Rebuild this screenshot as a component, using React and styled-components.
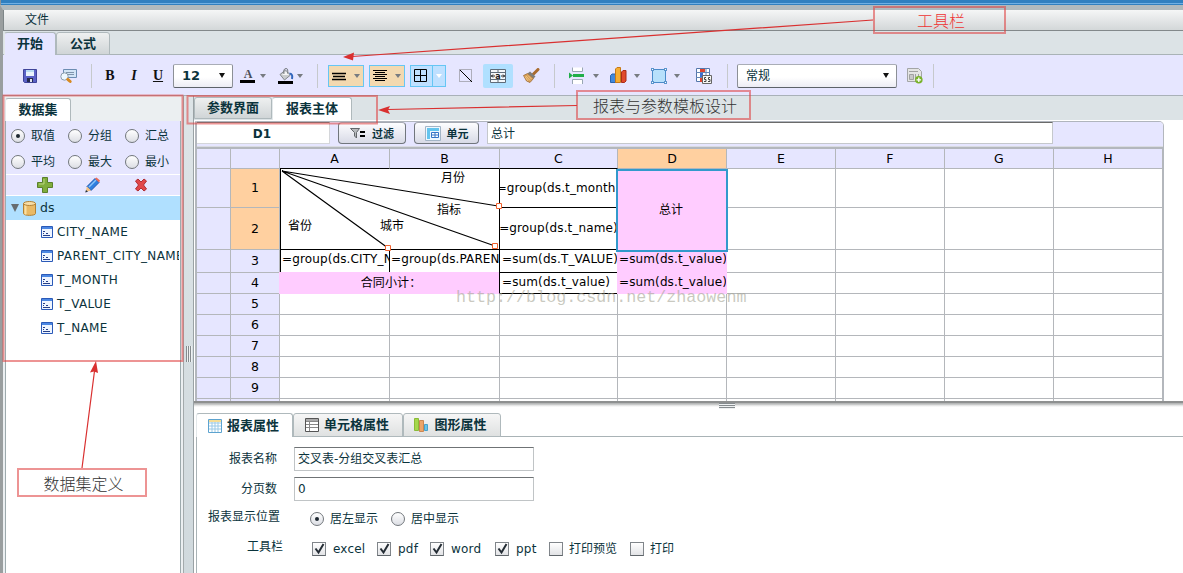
import React from 'react';
import styled, { createGlobalStyle, css } from 'styled-components';

const GlobalStyle = createGlobalStyle`
  * { box-sizing: border-box; }
  body {
    margin: 0;
    background: #fff;
    overflow: hidden;
  }
`

const Window = styled.div`
  position: relative;
  display: flex;
  flex-direction: column;
  width: 1183px;
  height: 573px;
  overflow: hidden;
  background: #fff;
  color: #0b333c;
  font-family: 'DejaVu Sans', 'Noto Sans CJK SC', sans-serif;
  font-size: 12px;
  line-height: 16px;
  white-space: nowrap;
`

const TitleStrip = styled.div`
  height: 5px;
  flex: none;
  border-left: 1px solid #8f9496;
  background: linear-gradient(#3080c0 0 3px, #6fb0e4 3px 4px, #3080c0 4px);
`

const Frame = styled.div`
  display: flex;
  flex-direction: column;
  flex: 1;
  min-height: 0;
  border-top: 5px solid #b0babe;
  border-left: 3px solid #999e9f;
`

const MenuBar = styled.div`
  flex: none;
  height: 21px;
  padding: 2px 0 0 21px;
  border-left: 1px solid #7e8688;
  border-bottom: 1px solid #83898b;
  background: linear-gradient(#f5f6f6, #d3d7d8);
  line-height: 17px;
`

const TabStrip = styled.div`
  display: flex;
  flex: none;
  height: 24px;
  padding: 1px 0 0 1px;
  background: #dce3e6;
  box-shadow: inset 0 -1px #a9b3b6;
`

const Tab = styled.div`
  display: flex;
  align-items: center;
  justify-content: center;
  gap: 5px;
  width: ${props => props.$w}px;
  height: ${props => props.$h || 23}px;
  padding-right: ${props => props.$pr || 0}px;
  border: 1px solid #afb9bc;
  border-left-color: ${props => props.$active ? '#e3e8ea' : '#afb9bc'};
  border-radius: 3px 3px 0 0;
  background: linear-gradient(${props => props.$light ? '#f6f6f6, #dfe1e1' : '#eef0f0, #d0d5d7'});
  font-size: 13px;
  font-weight: bold;
  ${props => props.$active && css`
    border-bottom: 0;
    background: ${props.$bg || '#fff'};
  `}
`

const Toolbar = styled.div`
  display: flex;
  align-items: center;
  flex: none;
  height: 41px;
  padding: 1px 0 0 20px;
  border-bottom: 1px solid #a9b1b8;
  background: #e6e6ff;
`

const Slot = styled.div`
  display: flex;
  align-items: center;
  justify-content: center;
  flex: none;
  width: ${props => props.$w}px;
  height: 24px;
  margin-left: ${props => props.$ml || 0}px;
`

const Letter = styled(Slot)`
  color: #111;
  font-family: 'Liberation Serif', serif;
  font-size: 14px;
  font-weight: bold;
  font-style: ${props => props.$italic ? 'italic' : 'normal'};
  text-decoration: ${props => props.$under ? 'underline' : 'none'};
`

const Divider = styled.i`
  flex: none;
  width: 1px;
  height: 24px;
  margin-left: ${props => props.$ml}px;
  background: #c6c9cc;
`

const Caret = styled.i`
  flex: none;
  width: 0;
  margin-left: ${props => props.$ml || 0}px;
  border: ${props => props.$s || 3.5}px solid transparent;
  border-bottom: 0;
  border-top: ${props => props.$h || 4}px solid ${props => props.$c || '#777b80'};
`

const Select = styled.div`
  display: flex;
  align-items: center;
  justify-content: space-between;
  flex: none;
  width: ${props => props.$w}px;
  height: 24px;
  margin-left: ${props => props.$ml}px;
  padding: 0 7px 0 8px;
  border: 1px solid #8c9096;
  border-top-color: #a9adb6;
  border-bottom-color: #5c6268;
  border-radius: 2px;
  background: linear-gradient(#fff 55%, #ececf4);
  font-size: ${props => props.$font || 12}px;
  font-weight: ${props => props.$bold ? 'bold' : 'normal'};
`

const SplitButton = styled.div`
  display: flex;
  align-items: center;
  flex: none;
  width: 36px;
  height: 22px;
  margin-left: ${props => props.$ml}px;
  padding-left: 2px;
  border: 1px solid #66c6f4;
  background: ${props => props.$blue ? '#bfe0ff' : '#f3d9b0'};
`

const SplitLine = styled.i`
  width: 1px;
  height: 20px;
  margin-left: 4px;
  background: #66c6f4;
`

const Merge = styled(Slot)`
  border-radius: 2px;
  background: #b0e0ff;
`

const Main = styled.div`
  display: flex;
  flex: 1;
  min-height: 0;
`

const Left = styled.div`
  display: flex;
  flex-direction: column;
  flex: none;
  width: 181px;
  background: #ebeff1;
  border-right: 1px solid #a3aaac;
`

const LeftTabs = styled.div`
  height: 25px;
  padding: 2px 0 0 2px;
`

const DataPanel = styled.div`
  flex: 1;
  margin: 0 2px;
  border-left: 1px solid #9daaad;
  border-right: 1px solid #9daaad;
  background: #fff;
`

const RadioGrid = styled.div`
  display: grid;
  grid-template-columns: 57px 57px 57px;
  grid-auto-rows: 26px;
  align-items: center;
  height: 53px;
  padding: 2px 0 0 5px;
  background: #e6e6ff;
`

const Choice = styled.label`
  display: flex;
  align-items: center;
  gap: 6px;
  margin-right: ${props => props.$mr || 0}px;
`

const Radio = styled.i`
  display: flex;
  align-items: center;
  justify-content: center;
  flex: none;
  width: 14px;
  height: 14px;
  border: 1px solid #72777c;
  border-radius: 50%;
  background: linear-gradient(#fff, #dcdee4);
  &::after {
    content: '';
    width: 4px;
    height: 4px;
    border-radius: 50%;
    background: ${props => props.$on ? '#1d2730' : 'transparent'};
  }
`

const PanelActions = styled.div`
  display: flex;
  align-items: center;
  height: 22px;
  padding-left: 30px;
  gap: 30px;
  border-top: 1px solid #fff;
  border-bottom: 1px solid #fff;
  background: #e6e6ff;
`

const TreeRoot = styled.div`
  display: flex;
  align-items: center;
  height: 24px;
  padding-left: 5px;
  gap: 4px;
  background: #b0e0ff;
  font-size: 12.5px;
`

const TreeLeaf = styled.div`
  display: flex;
  align-items: center;
  gap: 4px;
  height: 24px;
  padding-left: 35px;
  margin-right: 1px;
  overflow: hidden;
  letter-spacing: 0.4px;
  svg { flex: none; }
`

const Splitter = styled.div`
  display: flex;
  align-items: center;
  justify-content: center;
  flex: none;
  width: 10px;
  padding-top: 38px;
  border-right: 1px solid #9aa2a5;
  background: linear-gradient(#dde4e7, #d0d9dd);
`

const Grip = styled.i`
  width: ${props => props.$flat ? 16 : 6}px;
  height: ${props => props.$flat ? 6 : 16}px;
  background: repeating-linear-gradient(${props => props.$flat ? '180deg' : '90deg'}, #858b8e 0 1px, #eef1f2 1px 2px);
`

const Right = styled.div`
  display: flex;
  flex-direction: column;
  flex: 1;
  min-width: 0;
`

const EditorTabs = styled(TabStrip)`
  height: 24px;
  padding: 1px 0 0;
  box-shadow: none;
`

const Sheet = styled.div`
  flex: none;
  width: 969px;
  height: 280px;
  margin: 1px 0 0 1px;
  overflow: hidden;
  border-top: 1px solid #b0b5bd;
  border-left: 2px solid #b3b7bd;
  border-right: 1px solid #b3b7bd;
  border-radius: 0 5px 0 0;
  background: #fff;
`

const FormulaBar = styled.div`
  display: flex;
  height: 25px;
  border-bottom: 1px solid #d9dbe2;
  background: #e6e6ff;
`

const CellName = styled.div`
  width: 133px;
  height: 22px;
  padding-right: 2px;
  border: 1px solid #d4d6da;
  border-top-color: #777;
  border-left: 0;
  background: #fff;
  text-align: center;
  line-height: 22px;
  font-weight: bold;
`

const BarButton = styled.button`
  display: flex;
  align-items: center;
  justify-content: center;
  gap: 6px;
  flex: none;
  width: ${props => props.$w}px;
  height: 22px;
  margin: 0 0 0 8px;
  padding: 0;
  border: 1px solid #71767d;
  border-top-color: #a6a9b2;
  border-radius: 4px;
  background: linear-gradient(#fdfdff, #d8dae6);
  color: #0b333c;
  font: bold 11px/16px 'Noto Sans CJK SC', sans-serif;
`

const FormulaInput = styled.div`
  width: 566px;
  height: 22px;
  margin-left: 8px;
  padding-left: 3px;
  border: 1px solid #c5c8cc;
  border-top-color: #6a6a6a;
  background: #fff;
  line-height: 22px;
`

const Cells = styled.div`
  display: grid;
  grid-template-columns: 34px 49px 110px 110px 118px repeat(5, 109px);
  grid-template-rows: 20px 39px 42px 23px 21px repeat(6, 21px);
  border-top: 2px solid #b3b7bd;
`

const line = '#b4b7bb';

const Cell = styled.div`
  position: relative;
  grid-row: ${props => props.$r} / span ${props => props.$rs || 1};
  grid-column: ${props => props.$c} / span ${props => props.$cs || 1};
  display: flex;
  align-items: center;
  justify-content: ${props => props.$left ? 'flex-start' : 'center'};
  min-width: 0;
  overflow: hidden;
  padding-left: ${props => props.$pad || 0}px;
  padding-bottom: ${props => props.$up || 0}px;
  border-right: 1px solid ${props => props.$right || line};
  border-bottom: 1px solid ${props => props.$bottom || line};
  ${props => props.$edge && 'border-left: 1px solid #000;'}
  color: #000;
  letter-spacing: 0.12px;
  ${props => props.$pink && css`
    margin: -1px 0 0 -1px;
    border-color: #ffccff;
    border-right-color: ${props.$right || '#ffccff'};
    background: #ffccff;
  `}
`

const HeadCell = styled(Cell)`
  background: ${props => props.$sel ? '#ffd0a0' : '#e6e6ff'};
  font-size: 12.5px;
  line-height: 18px;
`

const SelectedCell = styled(Cell)`
  margin: 0 -1px -2px -2px;
  padding: 0 2px 2px 0;
  border: 2px solid #3399cc;
  background: #ffccff;
  letter-spacing: 0;
  z-index: 1;
`

const DiagonalLabel = styled.span`
  position: absolute;
  left: ${props => props.$x}px;
  top: ${props => props.$y}px;
  letter-spacing: 0;
`

const Lines = styled.svg`
  position: absolute;
  left: 0;
  top: 0;
  overflow: visible;
`

const HandleLayer = styled.svg`
  position: absolute;
  left: 0;
  top: 0;
  z-index: 3;
  pointer-events: none;
`

const SplitShadow = styled.div`
  display: flex;
  justify-content: center;
  flex: none;
  height: 12px;
  padding: 2px 0 0 76px;
  background: linear-gradient(#8e9090 0 2px, #b5b7b7 2px 3px, #dcdddd 4px, #fff 6px);
`

const PropertyTabs = styled(TabStrip)`
  margin-left: 2px;
  padding: 0;
  background: #fff;
`

const PropertyForm = styled.div`
  display: flex;
  flex-direction: column;
  flex: 1;
  margin-left: 2px;
  padding-top: 10px;
  border-left: 1px solid #a9b3b6;
`

const Field = styled.div`
  display: flex;
  align-items: center;
  height: ${props => props.$h}px;
`

const FieldLabel = styled.div`
  width: ${props => props.$w || 80}px;
  margin-right: ${props => props.$gap || 17}px;
  margin-top: ${props => props.$lift || 0}px;
  text-align: right;
`

const TextBox = styled.div`
  width: 240px;
  height: 24px;
  padding-left: 3px;
  border: 1px solid #c0c4c6;
  border-top-color: #6f7375;
  line-height: 22px;
`

const Check = styled.i`
  display: block;
  flex: none;
  width: 14px;
  height: 14px;
  border: 1px solid #80858a;
  border-bottom-color: #5f656a;
  background: linear-gradient(#fff, #e2e3e6);
  svg { display: block; overflow: visible; }
`

const CheckItem = styled(Choice)`
  width: ${props => props.$w}px;
  gap: ${props => props.$gap || 7}px;
  letter-spacing: ${props => props.$gap ? 0 : 0.2}px;
`

const Overlay = styled.svg`
  position: absolute;
  inset: 0;
  z-index: 5;
  pointer-events: none;
`

const Note = styled.div`
  position: absolute;
  left: ${props => props.$x}px;
  top: ${props => props.$y}px;
  z-index: 6;
  width: ${props => props.$w}px;
  height: ${props => props.$h}px;
  padding-left: 3px;
  border: 2px solid rgba(222, 60, 60, 0.55);
  color: ${props => props.$red ? '#e33' : '#333'};
  font-family: 'Noto Sans CJK SC', sans-serif;
  font-size: 16px;
  font-weight: 300;
  line-height: ${props => props.$h - 3}px;
  text-align: center;
`

const Watermark = styled.div`
  position: absolute;
  left: 456px;
  top: 288px;
  z-index: 4;
  color: rgba(165, 165, 150, 0.6);
  font-family: 'Liberation Mono', monospace;
  font-size: 16.7px;
  line-height: 20px;
`

const SaveIcon = () => (
  <svg width="14" height="14" viewBox="0 0 14 14">
    <path d="M.5.5h13v13h-12l-1-1z" fill="#5a62c6" stroke="#3f4499" />
    <path d="M3 1h8v6H3z" fill="#e9f4fc" />
    <path d="M3 1h8v2H3z" fill="#b9dcf4" />
    <path d="M4 9h6v4H4z" fill="#252a4d" />
    <path d="M7 10h2v3H7z" fill="#dfe3ef" />
  </svg>
)

const PreviewIcon = () => (
  <svg width="17" height="16" viewBox="0 0 17 16">
    <path d="M3.500 1.500h13v8h-13z" fill="#d3e5f6" stroke="#6c8db2" />
    <path d="M6 4.500h8M8 6.500h6" stroke="#7f95ac" />
    <circle cx="4.500" cy="8.500" r="3.700" fill="#eef8ff" stroke="#8a9cab" />
    <path d="M7.800 11.300l2.400 2.200" stroke="#d78a22" strokeWidth="3" strokeLinecap="round" />
  </svg>
)

const FontColorIcon = () => (
  <svg width="15" height="16" viewBox="0 0 15 16">
    <text x="8" y="10" textAnchor="middle" fontFamily="Liberation Serif, serif" fontWeight="bold" fontSize="12" fill="#4a4d58">A</text>
    <path d="M0 12h15v3H0z" fill="#000" />
  </svg>
)

const BucketIcon = () => (
  <svg width="16" height="18" viewBox="0 0 16 18">
    <path d="M2 7.500L7.500 3l5 5-6 5z" fill="#c9cbcd" stroke="#84888c" />
    <path d="M4 8l4-3.500 3 3.500z" fill="#f5f5f5" />
    <path d="M6 7c-1-3 0-5.500 2-5.500s2 2 1.500 5" fill="none" stroke="#797d81" />
    <path d="M11.500 6.500c3 0 3 3 2.500 5.500" fill="none" stroke="#3267bd" strokeWidth="2" />
    <path d="M0 14h15v3H0z" fill="#000" />
  </svg>
)

const LinesIcon = ({ center }) => (
  <svg width="17" height="14" viewBox="0 0 17 14" stroke="#000">
    {center
      ? <path d="M1 1.500h14M3 3.500h10M1 5.500h14M3 7.500h10M1 9.500h14M3 11.500h10" />
      : <path d="M1 4.500h14M2 7.500h12M1 10.500h14" strokeWidth="1.300" />}
  </svg>
)

const BorderIcon = () => (
  <svg width="15" height="15" viewBox="0 0 15 15">
    <path d="M1.500 1.500h12v12h-12zM7.500 1.500v12M1.500 7.500h12" fill="none" stroke="#000" />
  </svg>
)

const DiagonalIcon = () => (
  <svg width="14" height="14" viewBox="0 0 14 14">
    <path d="M.5.5h12v12H.5z" fill="none" stroke="#777" strokeDasharray="1 1" />
    <path d="M1 1l12 12" stroke="#000" />
  </svg>
)

const MergeIcon = () => (
  <svg width="16" height="14" viewBox="0 0 16 14">
    <path d="M.5.5h15v13H.5z" fill="#f4f8fb" stroke="#5f6c79" />
    <path d="M.5 3.500h15M.5 10.500h15M8 .5v3M8 10.500v3" stroke="#5f6c79" />
    <path d="M1 7h4M15 7h-4M3 5.500L1.500 7 3 8.500M13 5.500L14.500 7 13 8.500" fill="none" stroke="#222" />
    <text x="8" y="9.500" textAnchor="middle" fontFamily="DejaVu Sans" fontWeight="bold" fontSize="8" fill="#222">a</text>
  </svg>
)

const BrushIcon = () => (
  <svg width="17" height="15" viewBox="0 0 17 15">
    <path d="M15 1.500L9.500 7" stroke="#a96b2e" strokeWidth="3" strokeLinecap="round" />
    <path d="M7 3.500l5.500 5-2 2-6-5z" fill="#7f7e79" />
    <path d="M4.500 5.500l6 5-3.500 4L3.500 13 .5 7.500z" fill="#d59d55" stroke="#96612a" strokeWidth=".7" />
    <path d="M3 8l4 4.500M5 7.500l3.500 3.500M2 8.500l3 4.500" stroke="#f0c583" />
  </svg>
)

const InsertIcon = () => (
  <svg width="17" height="18" viewBox="0 0 17 18">
    <path d="M3.500.5v4h10v-4M3.500 17v-4.500h10V17" fill="#fff" stroke="#98a6b3" />
    <path d="M4 7h11v3H4z" fill="#20ae48" />
    <path d="M0 5.500l4 3-4 3z" fill="#20ae48" />
  </svg>
)

const ChartIcon = () => (
  <svg width="17" height="17" viewBox="0 0 17 17">
    <path d="M.5 8.500l1.500-1.500h3.500v8.500h-5z" fill="#4188dc" stroke="#2863ac" />
    <path d="M5.500 2l1.500-1.500h3.500v15h-5z" fill="#f5ad32" stroke="#c77916" />
    <path d="M11.500 5l1.500-1.500h3v10.500l-1.500 1.500h-3z" fill="#e14a2b" stroke="#a92d19" />
  </svg>
)

const AreaIcon = () => (
  <svg width="16" height="16" viewBox="0 0 16 16">
    <path d="M1.500 1.500h13v13h-13z" fill="#b7e0fb" stroke="#4a8bc9" />
    <path d="M0 0h3v3H0zM13 0h3v3h-3zM0 13h3v3H0zM13 13h3v3h-3z" fill="#5c95cc" />
    <path d="M1 1h1v1H1zM14 1h1v1h-1zM1 14h1v1H1zM14 14h1v1h-1z" fill="#fff" />
  </svg>
)

const FormatIcon = () => (
  <svg width="16" height="16" viewBox="0 0 16 16">
    <path d="M.5.5h13v13H.5z" fill="#fff" stroke="#5577ab" />
    <path d="M0 4.500h14M0 9.500h10M10 0v8" stroke="#6485b4" />
    <path d="M4 1h5v3H4zM4 10h3v4H4z" fill="#df4430" />
    <path d="M4 5h3v4H4z" fill="#3c6ed0" />
    <path d="M6.500 7.500h9v8h-9z" fill="#f7f7f4" stroke="#666" />
    <path d="M10 9.500H8.500v2H10v2H8M14 9.500h-1.500v2H14v2h-2" fill="none" stroke="#444" />
  </svg>
)

const AddSheetIcon = () => (
  <svg width="16" height="16" viewBox="0 0 16 16">
    <path d="M.5.5h11l3 3v10H.5z" fill="#e4e4e4" stroke="#a3a5a6" />
    <path d="M2 3.500h9M2.500 6.500h4v5h-4zM8.500 6v6M11.500 6v3" fill="#c8c8c8" stroke="#a1a1a1" />
    <circle cx="11.800" cy="11.800" r="3.800" fill="#78b22a" />
    <path d="M9.500 11.800h4.600M11.800 9.500v4.600" stroke="#fff" strokeWidth="1.300" />
  </svg>
)

const PlusIcon = () => (
  <svg width="18" height="16" viewBox="0 0 18 16">
    <path d="M6.500.5h5v5h5v5h-5v5h-5v-5h-5v-5h5z" fill="#80ad3c" stroke="#5a812b" />
    <path d="M8 2v5H3" fill="none" stroke="#b9d67f" />
  </svg>
)

const PencilIcon = () => (
  <svg width="18" height="16" viewBox="0 0 18 16">
    <path d="M3 9.500L11 1.500l4 4-8 8z" fill="#2f7fe0" stroke="#1c56b0" />
    <path d="M5 10l7-7" stroke="#8cc4f7" strokeWidth="1.500" />
    <path d="M11 1.500L12.500.5l3.500 3-1 2z" fill="#ec6a55" />
    <path d="M3 9.500L1.500 15 7 13.500z" fill="#f1c183" />
    <path d="M2 13l-.8 2.500L4 14.800z" fill="#234" />
  </svg>
)

const CrossIcon = () => (
  <svg width="18" height="14" viewBox="0 0 18 14">
    <path d="M3.500 3L6 1l3 3L12 1l2.500 2-3 4 3 4L12 13 9 10 6 13l-2.500-2 3-4z" fill="#e1474a" stroke="#b12d31" />
  </svg>
)

const DatabaseIcon = () => (
  <svg width="13" height="15" viewBox="0 0 13 15">
    <path d="M.5 2.500v10c0 2.500 12 2.500 12 0v-10z" fill="#e9b965" stroke="#b18135" />
    <path d="M2.500 4v9.500" stroke="#fbe0a3" strokeWidth="2" />
    <ellipse cx="6.500" cy="2.500" rx="6" ry="2" fill="#f7dda6" stroke="#b18135" />
  </svg>
)

const ColumnIcon = () => (
  <svg width="12" height="12" viewBox="0 0 12 12">
    <path d="M.5.5h11v11H.5z" fill="#eff5ff" stroke="#2b5ab8" />
    <path d="M1 1h10v2H1z" fill="#4c87e2" />
    <path d="M2 5.500h2M2 7.500h1M5 7.500h2M2 9.500h7" stroke="#263f87" />
  </svg>
)

const FilterIcon = () => (
  <svg width="16" height="11" viewBox="0 0 16 11">
    <path d="M.5.5h9L6.500 4.500V10l-2-2V4.500z" fill="#b7babd" stroke="#63676b" />
    <path d="M10 4h5M10 8h5" stroke="#000" strokeWidth="2" />
  </svg>
)

const UnitIcon = () => (
  <svg width="16" height="15" viewBox="0 0 16 15">
    <path d="M.5.5h15v14H.5z" fill="#eff8ff" stroke="#a2b4c6" />
    <path d="M2 2h12v3H2zM2 5h3v8H2z" fill="#64c4ee" />
    <path d="M6.500 6.500h7v5h-7zM10 6.500v5M6.500 9h7" fill="#fff" stroke="#3474c7" />
  </svg>
)

const TableIcon = ({ gray }) => (
  <svg width="14" height="14" viewBox="0 0 14 14">
    <path d="M.5.5h13v13H.5z" fill="#fff" stroke={gray ? '#555' : '#5da3cf'} />
    <path d="M1 1h12v2H1z" fill={gray ? '#aaa' : '#f5dd95'} />
    <path d={gray ? 'M1 3.500h12M1 6.500h12M1 9.500h12M4.500 3v10' : 'M1 4h12M1 7h12M1 10h12M4 3v10M7 3v10M10 3v10'} stroke={gray ? '#888' : '#99c9e6'} />
  </svg>
)

const BarsIcon = () => (
  <svg width="15" height="14" viewBox="0 0 15 14">
    <path d="M.5.5h4v12h-4z" fill="#a5d74b" stroke="#8abb37" />
    <path d="M5.500 2.500h4v11h-4z" fill="#eca469" stroke="#ca8752" />
    <path d="M10.500 6.500h3v6h-3z" fill="#6ac4e7" stroke="#46a1cd" />
  </svg>
)

const CheckMark = () => (
  <svg width="12" height="12" viewBox="0 0 12 12">
    <path d="M2.500 5.500l3 4L10.500 1" fill="none" stroke="#252d35" strokeWidth="2" />
  </svg>
)

const radios = ['取值', '分组', '汇总', '平均', '最大', '最小'];
const fields = ['CITY_NAME', 'PARENT_CITY_NAME', 'T_MONTH', 'T_VALUE', 'T_NAME'];
const columns = ['A', 'B', 'C', 'D', 'E', 'F', 'G', 'H'];
const rows = [1, 2, 3, 4, 5, 6, 7, 8, 9, ''];
const exportTools = [
  { name: 'excel', w: 65, on: true },
  { name: 'pdf', w: 53, on: true },
  { name: 'word', w: 65, on: true },
  { name: 'ppt', w: 54, on: true },
  { name: '打印预览', w: 81, gap: 6 },
  { name: '打印', w: 60, gap: 6 },
];

function ToolRow() {
  return (
    <Toolbar>
      <Slot $w={14}><SaveIcon /></Slot>
      <Slot $w={17} $ml={23}><PreviewIcon /></Slot>
      <Divider $ml={14} />
      <Letter $w={10} $ml={13}>B</Letter>
      <Letter $w={10} $ml={14} $italic>I</Letter>
      <Letter $w={10} $ml={14} $under>U</Letter>
      <Select $w={60} $ml={10} $font={13} $bold>12<Caret $c="#111" $h={5} /></Select>
      <Slot $w={15} $ml={7}><FontColorIcon /></Slot>
      <Caret $ml={5} />
      <Slot $w={16} $ml={12}><BucketIcon /></Slot>
      <Caret $ml={3} />
      <Divider $ml={14} />
      <SplitButton $ml={10}><LinesIcon /><Caret $ml={6} /></SplitButton>
      <SplitButton $ml={5}><LinesIcon center /><Caret $ml={6} /></SplitButton>
      <SplitButton $ml={5} $blue>
        <BorderIcon /><SplitLine /><Caret $ml={3} $c="#fff" />
      </SplitButton>
      <Slot $w={14} $ml={13}><DiagonalIcon /></Slot>
      <Merge $w={30} $ml={10}><MergeIcon /></Merge>
      <Slot $w={17} $ml={10}><BrushIcon /></Slot>
      <Divider $ml={14} />
      <Slot $w={17} $ml={14}><InsertIcon /></Slot>
      <Caret $ml={7} $s={3} />
      <Slot $w={17} $ml={11}><ChartIcon /></Slot>
      <Caret $ml={7} $s={3} />
      <Slot $w={16} $ml={11}><AreaIcon /></Slot>
      <Caret $ml={7} $s={3} />
      <Slot $w={16} $ml={16}><FormatIcon /></Slot>
      <Divider $ml={15} />
      <Select $w={160} $ml={9}>常规<Caret $c="#111" $h={5} /></Select>
      <Slot $w={16} $ml={10}><AddSheetIcon /></Slot>
      <Divider $ml={10} />
    </Toolbar>
  );
}

function DataSets() {
  return (
    <Left>
      <LeftTabs><Tab $w={66} $active>数据集</Tab></LeftTabs>
      <DataPanel>
        <RadioGrid>
          {radios.map((name, i) => <Choice key={name}><Radio $on={i === 0} />{name}</Choice>)}
        </RadioGrid>
        <PanelActions><PlusIcon /><PencilIcon /><CrossIcon /></PanelActions>
        <TreeRoot>
          <Caret $s={4.5} $h={8} $c="#666c70" />
          <DatabaseIcon />
          ds
        </TreeRoot>
        {fields.map(name => <TreeLeaf key={name}><ColumnIcon />{name}</TreeLeaf>)}
      </DataPanel>
    </Left>
  );
}

function Grid() {
  const blank = [];
  rows.forEach((row, r) => {
    columns.forEach((col, c) => {
      if (r < 4 && c < 4) return;
      blank.push(<Cell key={col + r} $r={r + 2} $c={c + 3} />);
    });
  });

  return (
    <Cells>
      <HeadCell $r={1} $c={1} />
      <HeadCell $r={1} $c={2} />
      {columns.map((col, i) => (
        <HeadCell key={col} $r={1} $c={i + 3} $sel={col === 'D'} $bottom={i < 3 ? '#000' : line}>{col}</HeadCell>
      ))}
      {rows.map((row, i) => (
        <React.Fragment key={i}>
          <HeadCell $r={i + 2} $c={1} />
          <HeadCell $r={i + 2} $c={2} $sel={i < 2}>{row}</HeadCell>
        </React.Fragment>
      ))}
      {blank}
      <Cell $r={2} $c={3} $rs={2} $cs={2} $edge $right="#000" $bottom="#000">
        <Lines width="219" height="80" stroke="#000" strokeWidth="1.200">
          <path d="M1 2L217 37M1 2L214 77M1 2L107 79" />
        </Lines>
        <DiagonalLabel $x={160} $y={1}>月份</DiagonalLabel>
        <DiagonalLabel $x={156} $y={33}>指标</DiagonalLabel>
        <DiagonalLabel $x={99} $y={49}>城市</DiagonalLabel>
        <DiagonalLabel $x={7} $y={49}>省份</DiagonalLabel>
      </Cell>
      <Cell $r={2} $c={5} $bottom="#000">=group(ds.t_month)</Cell>
      <Cell $r={3} $c={5} $up={2} $bottom="#000">=group(ds.t_name)</Cell>
      <Cell $r={4} $c={3} $left $edge $pad={1} $right="#000" $up={4}>=group(ds.CITY_N</Cell>
      <Cell $r={4} $c={4} $left $pad={1} $right="#000" $up={4}>=group(ds.PAREN</Cell>
      <Cell $r={4} $c={5} $left $pad={2} $bottom="#000" $up={4}>=sum(ds.T_VALUE)</Cell>
      <Cell $r={5} $c={5} $left $pad={2} $bottom="#000" $up={2}>=sum(ds.t_value)</Cell>
      <Cell $r={5} $c={3} $cs={2} $pink $pad={4} $right="#000">合同小计：</Cell>
      <Cell $r={4} $c={6} $left $pad={2} $pink $up={4}>=sum(ds.t_value)</Cell>
      <Cell $r={5} $c={6} $left $pad={2} $pink $up={2}>=sum(ds.t_value)</Cell>
      <SelectedCell $r={2} $c={6} $rs={2}>总计</SelectedCell>
    </Cells>
  );
}

function Properties() {
  return (
    <>
      <PropertyTabs>
        <Tab $w={97} $h={24} $pr={2} $active><TableIcon />报表属性</Tab>
        <Tab $w={110} $h={24} $pr={2} $light><TableIcon gray />单元格属性</Tab>
        <Tab $w={98} $h={24} $pr={3} $light><BarsIcon />图形属性</Tab>
      </PropertyTabs>
      <PropertyForm>
        <Field $h={24}><FieldLabel>报表名称</FieldLabel><TextBox>交叉表-分组交叉表汇总</TextBox></Field>
        <Field $h={36}><FieldLabel>分页数</FieldLabel><TextBox>0</TextBox></Field>
        <Field $h={24}>
          <FieldLabel $w={83} $gap={30} $lift={-4}>报表显示位置</FieldLabel>
          <Choice $mr={13}><Radio $on />居左显示</Choice>
          <Choice><Radio />居中显示</Choice>
        </Field>
        <Field $h={36}>
          <FieldLabel $w={86} $gap={29} $lift={-4}>工具栏</FieldLabel>
          {exportTools.map(tool => (
            <CheckItem key={tool.name} $w={tool.w} $gap={tool.gap}>
              <Check>{tool.on && <CheckMark />}</Check>{tool.name}
            </CheckItem>
          ))}
        </Field>
      </PropertyForm>
    </>
  );
}

// callouts are drawn last so they stay above the panels
function Annotations() {
  return (
    <>
      <Overlay width="1183" height="573">
        <g fill="none" stroke="#de3c3c" strokeOpacity=".55" strokeWidth="2">
          <path d="M3.500 95.500h179v265.500h-179z" />
          <path d="M187.500 96h189.500v27.500h-189.500z" />
        </g>
        <path d="M873 20L352 56.500M577 105.500L388 109.500M82 468L94.500 371" stroke="#d93030" strokeWidth="1.200" />
        <path d="M343 57l11-4.500-1 8zM378 110l12-4-2 4 2 4zM96 361l-6 11.500 4-1 4 1.500z" fill="#d93030" />
      </Overlay>
      <HandleLayer width="1183" height="573" fill="#fff" stroke="#f0622e" strokeWidth="1">
        <path d="M496.500 203.500h5v5h-5zM492.500 243.500h5v5h-5zM385.500 245.500h5v5h-5z" />
      </HandleLayer>
      <Note $x={873} $y={6} $w={133} $h={28} $red>工具栏</Note>
      <Note $x={576} $y={90} $w={175} $h={30}>报表与参数模板设计</Note>
      <Note $x={17} $y={468} $w={130} $h={29}>数据集定义</Note>
      <Watermark>http://blog.csdn.net/zhaowenm</Watermark>
    </>
  );
}

function App() {
  return (
    <Window>
      <GlobalStyle />
      <TitleStrip />
      <Frame>
        <MenuBar>文件</MenuBar>
        <TabStrip>
          <Tab $w={52} $active $bg="#e6e6ff">开始</Tab>
          <Tab $w={54}>公式</Tab>
        </TabStrip>
        <ToolRow />
        <Main>
          <DataSets />
          <Splitter><Grip /></Splitter>
          <Right>
            <EditorTabs>
              <Tab $w={78} $h={22}>参数界面</Tab>
              <Tab $w={80} $active>报表主体</Tab>
            </EditorTabs>
            <Sheet>
              <FormulaBar>
                <CellName>D1</CellName>
                <BarButton $w={68}><FilterIcon />过滤</BarButton>
                <BarButton $w={65}><UnitIcon />单元</BarButton>
                <FormulaInput>总计</FormulaInput>
              </FormulaBar>
              <Grid />
            </Sheet>
            <SplitShadow><Grip $flat /></SplitShadow>
            <Properties />
          </Right>
        </Main>
      </Frame>
      <Annotations />
    </Window>
  );
}

export default App;
